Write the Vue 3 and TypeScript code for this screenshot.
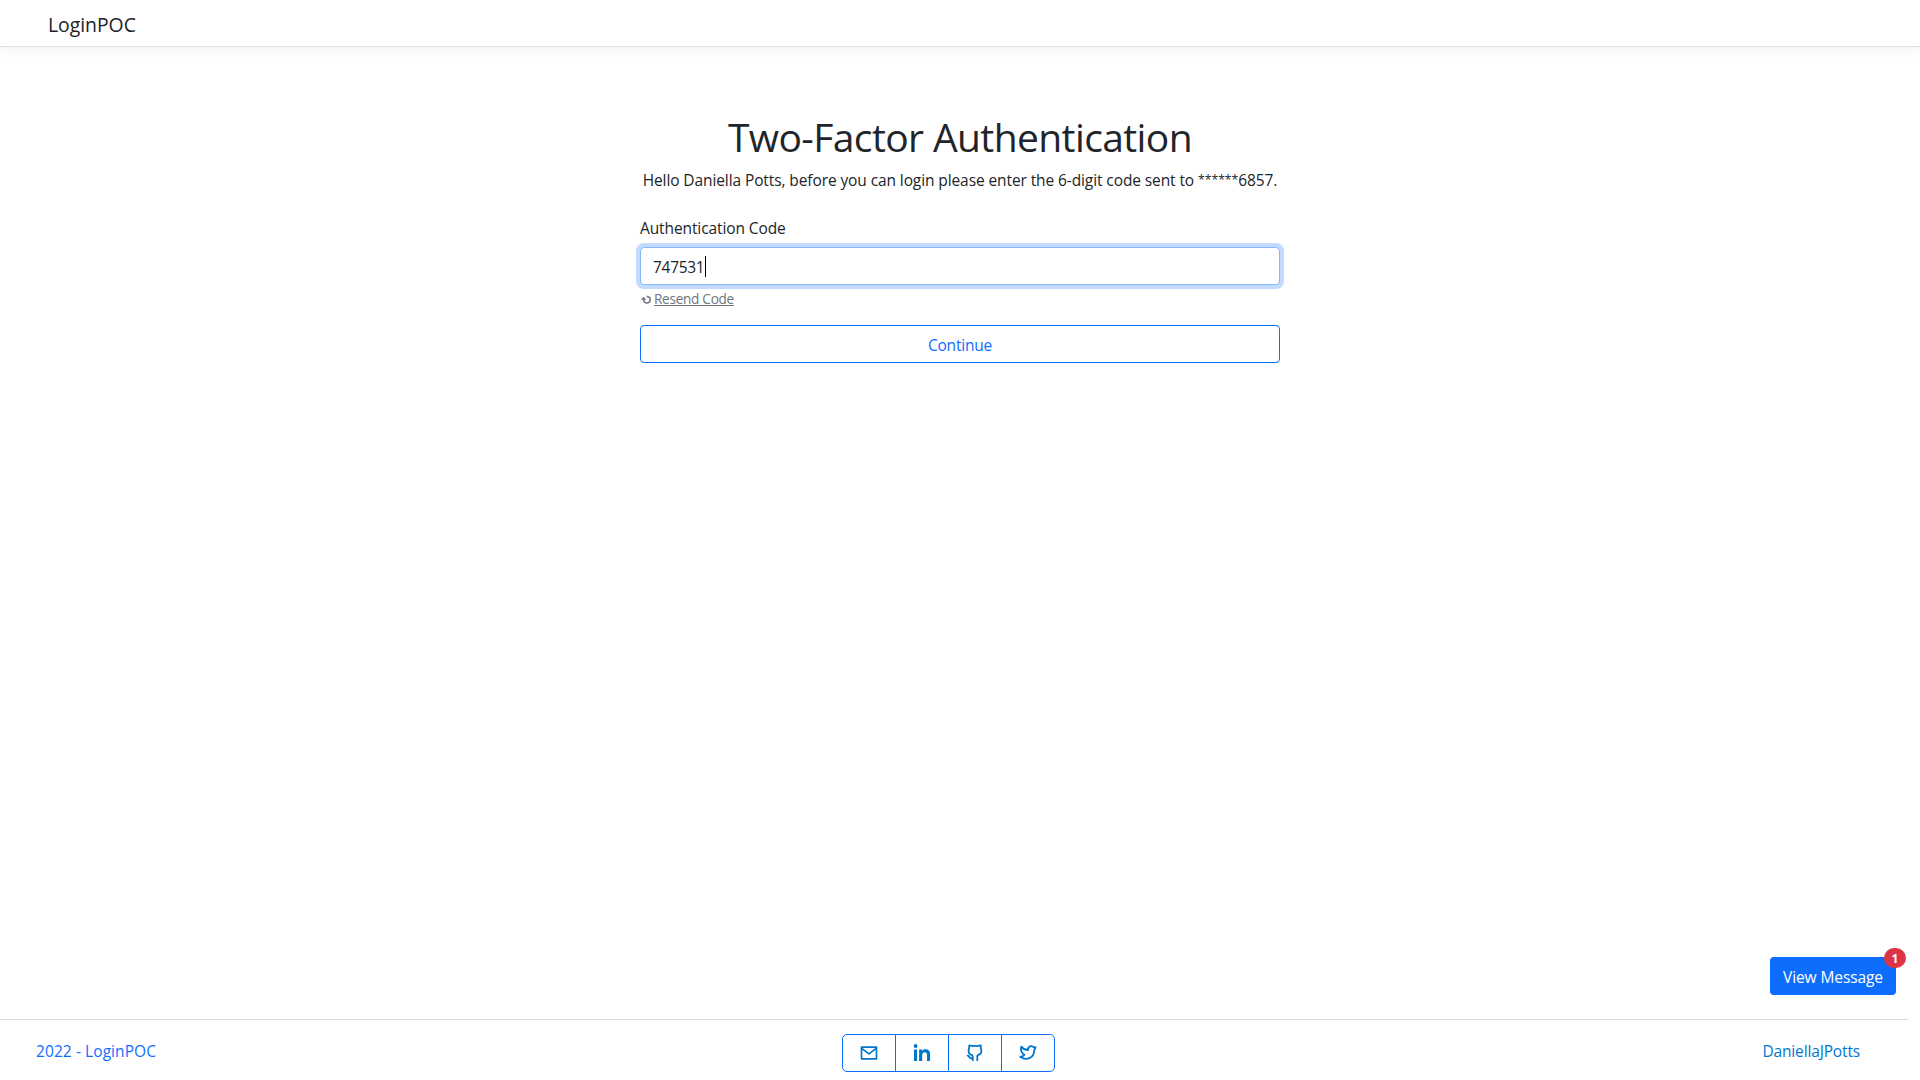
<script setup lang="ts">
import { onMounted, ref } from 'vue'

const code = ref('747531')
const input = ref<HTMLInputElement | null>(null)

onMounted(() => input.value?.focus())
</script>

<template>
  <div class="page">
    <header class="navbar">
      <a class="brand">LoginPOC</a>
    </header>

    <main class="main">
      <form class="login" @submit.prevent>
        <h1 class="title"><span>Two-Factor Authentication</span></h1>
        <p class="hello">Hello Daniella Potts, before you can login please enter the 6-digit code sent to <span class="mask">******</span>6857.</p>
        <label class="label" for="code"><span>Authentication Code</span></label>
        <div class="field">
          <input id="code" ref="input" v-model="code" class="control" type="text" autocomplete="off" />
          <i class="caret"></i>
        </div>
        <div class="resend">
          <svg width="11" height="10" viewBox="0 0 11 10" fill="none" stroke="#6c757d" stroke-width="1.5">
            <path d="M5.6 1.4H6.4A3.3 3.3 0 1 1 2.7 5.4V3" />
            <path d="M0 4.7 2.6 1.8 5.3 4.7Z" fill="#6c757d" stroke="none" />
          </svg>
          <a>Resend Code</a>
        </div>
        <button class="continue" type="submit"><span>Continue</span></button>
      </form>
    </main>

    <div class="message-row">
      <button class="message" type="button"><span>View Message</span><b class="badge">1</b></button>
    </div>

    <footer class="footer">
      <a class="copyright">2022 - LoginPOC</a>
      <div class="socials">
        <a class="social" aria-label="Email">
          <svg width="20" height="20" viewBox="0 0 24 24" fill="none" stroke="#0077cc" stroke-width="2" stroke-linejoin="round">
            <path d="M3 5H21V19H3ZM3 6.2 12 13 21 6.2" />
          </svg>
        </a>
        <a class="social" aria-label="LinkedIn">
          <svg width="20" height="20" viewBox="0 0 20 20" fill="#0077cc">
            <circle cx="3.6" cy="3" r="1.9" />
            <path d="M2 6.6H5.1V18.1H2ZM7.1 6.6H10V8C10.7 6.9 11.8 6.3 13.3 6.3C16.7 6.3 18.1 8.3 18.1 11.6V18.1H15V12C15 10.2 14.3 9.2 12.8 9.2C11.1 9.2 10.2 10.3 10.2 12V18.1H7.1Z" />
          </svg>
        </a>
        <a class="social" aria-label="GitHub">
          <svg width="20" height="20" viewBox="0 0 20 20" fill="none" stroke="#0077cc" stroke-width="1.8" stroke-linecap="round" stroke-linejoin="round">
            <path d="M7.8 17.3V13.6C7.7 12.8 7.4 12.4 6.9 12C4.5 11.5 3.6 9.6 3.6 7.4C3.6 6.3 3.9 5.3 4.3 4.7C4 3.7 4.1 2.9 4.3 2.3C5.6 2.3 6.7 2.7 7.7 3.2C9.2 2.9 10.8 2.9 12.3 3.2C13.3 2.7 14.4 2.3 15.7 2.3C16 2.9 16 3.8 15.7 4.7C16.2 5.4 16.4 6.3 16.4 7.4C16.4 9.7 15.4 11.5 13 12C12.5 12.4 12.3 12.8 12.3 13.6V17.3M7.5 15.4C5.4 15.8 4.8 14.7 4.2 13.8C3.8 13.2 3.4 12.8 2.7 12.6" />
          </svg>
        </a>
        <a class="social" aria-label="Twitter">
          <svg width="20" height="20" viewBox="0 0 20 20" fill="none" stroke="#0077cc" stroke-width="1.8" stroke-linejoin="round">
            <path d="M17.5 4.2 15.7 4.4C14.5 2.8 12.3 2.7 11 4C10.2 4.8 9.9 5.8 10.1 7C7.3 7 5 5.8 3.3 3.6C2.3 6.7 3.1 9.7 6.4 11.8C5.3 13 3.9 13.7 2.2 13.8C8.4 18 16.1 15.2 16.1 7.5C16.8 6.6 17.3 5.5 17.5 4.2Z" />
          </svg>
        </a>
      </div>
      <a class="author">DaniellaJPotts</a>
    </footer>
  </div>
</template>

<style>
body {
  margin: 0;
  background: #fff;
  overflow: hidden;
}
</style>

<style scoped>
.page {
  box-sizing: border-box;
  display: flex;
  flex-direction: column;
  height: 1080px;
  font-family: "Open Sans", "Noto Sans", sans-serif;
  font-size: 15.5px;
  line-height: 24px;
  color: #212529;
}
.navbar {
  box-sizing: border-box;
  height: 47px;
  padding: 10px 48px 0;
  border-bottom: 1px solid #dee2e6;
  box-shadow: 0 4px 12px rgba(0, 0, 0, 0.05);
}
.brand {
  font-size: 19.4px;
  line-height: 30px;
  letter-spacing: -0.03px;
}
.main {
  display: flex;
  flex: 1;
  justify-content: center;
}
.login {
  width: 640px;
  padding-top: 66px;
}
.title {
  margin: 0 0 7px;
  font-size: 39px;
  font-weight: 400;
  line-height: 48px;
  text-align: center;
  white-space: nowrap;
  letter-spacing: -0.6px;
}
.hello {
  height: 24px;
  margin: 0 0 24px;
  text-align: center;
  white-space: nowrap;
  letter-spacing: -0.1px;
}
.mask {
  font-size: 12.2px;
  line-height: 1;
  letter-spacing: 0;
  vertical-align: 2px;
}
.label {
  display: block;
  margin-bottom: 7px;
  letter-spacing: -0.1px;
}
.field {
  position: relative;
  height: 38px;
}
.control {
  box-sizing: border-box;
  display: block;
  width: 100%;
  height: 38px;
  padding: 8px 12px 6px;
  border: 1px solid #86b7fe;
  border-radius: 4px;
  outline: 0;
  box-shadow: 0 0 0 4px rgba(13, 110, 253, 0.25);
  background: #fff;
  color: #212529;
  caret-color: transparent;
  font: inherit;
  letter-spacing: -0.3px;
}
.caret {
  position: absolute;
  top: 9px;
  left: 65px;
  width: 1px;
  height: 21px;
  background: #000;
}
.resend {
  display: flex;
  align-items: center;
  gap: 2px;
  height: 21px;
  margin: 3px 0 16px;
  padding-left: 1px;
  font-size: 13.6px;
  line-height: 21px;
  letter-spacing: -0.28px;
  color: #6c757d;
}
.resend svg {
  margin-top: 2px;
}
.resend a {
  text-decoration: underline;
}
.continue {
  box-sizing: border-box;
  display: block;
  width: 100%;
  height: 38px;
  padding: 2px 0 0;
  border: 1px solid #0d6efd;
  border-radius: 4px;
  background: #fff;
  color: #0d6efd;
  font: inherit;
  letter-spacing: -0.2px;
}
.message-row {
  display: flex;
  justify-content: flex-end;
  padding: 0 24px 24px 0;
}
.message {
  position: relative;
  box-sizing: border-box;
  width: 126px;
  height: 38px;
  padding: 2px 0 0;
  border: 0;
  border-radius: 4px;
  background: #0d6efd;
  color: #fff;
  font: inherit;
  white-space: nowrap;
  letter-spacing: -0.1px;
}
.badge {
  position: absolute;
  top: -9px;
  right: -10px;
  width: 22px;
  height: 20px;
  border-radius: 10px;
  background: #dc3545;
  font-size: 12px;
  line-height: 21px;
  text-align: center;
}
.footer {
  box-sizing: border-box;
  display: grid;
  grid-template-columns: 1fr auto 1fr;
  align-items: start;
  height: 61px;
  margin-right: 12px;
  padding: 14px 48px 0 36px;
  border-top: 1px solid #dedede;
}
.copyright {
  padding-top: 5px;
  color: #0d6efd;
  letter-spacing: 0.08px;
}
.socials {
  box-sizing: border-box;
  display: flex;
  width: 213px;
  height: 38px;
  border: 1px solid #0d6efd;
  border-radius: 5px;
}
.social {
  display: flex;
  flex: 1;
  align-items: center;
  justify-content: center;
}
.social + .social {
  border-left: 1px solid #0d6efd;
}
.author {
  justify-self: end;
  padding-top: 5px;
  color: #0077cc;
  letter-spacing: -0.15px;
}
</style>
